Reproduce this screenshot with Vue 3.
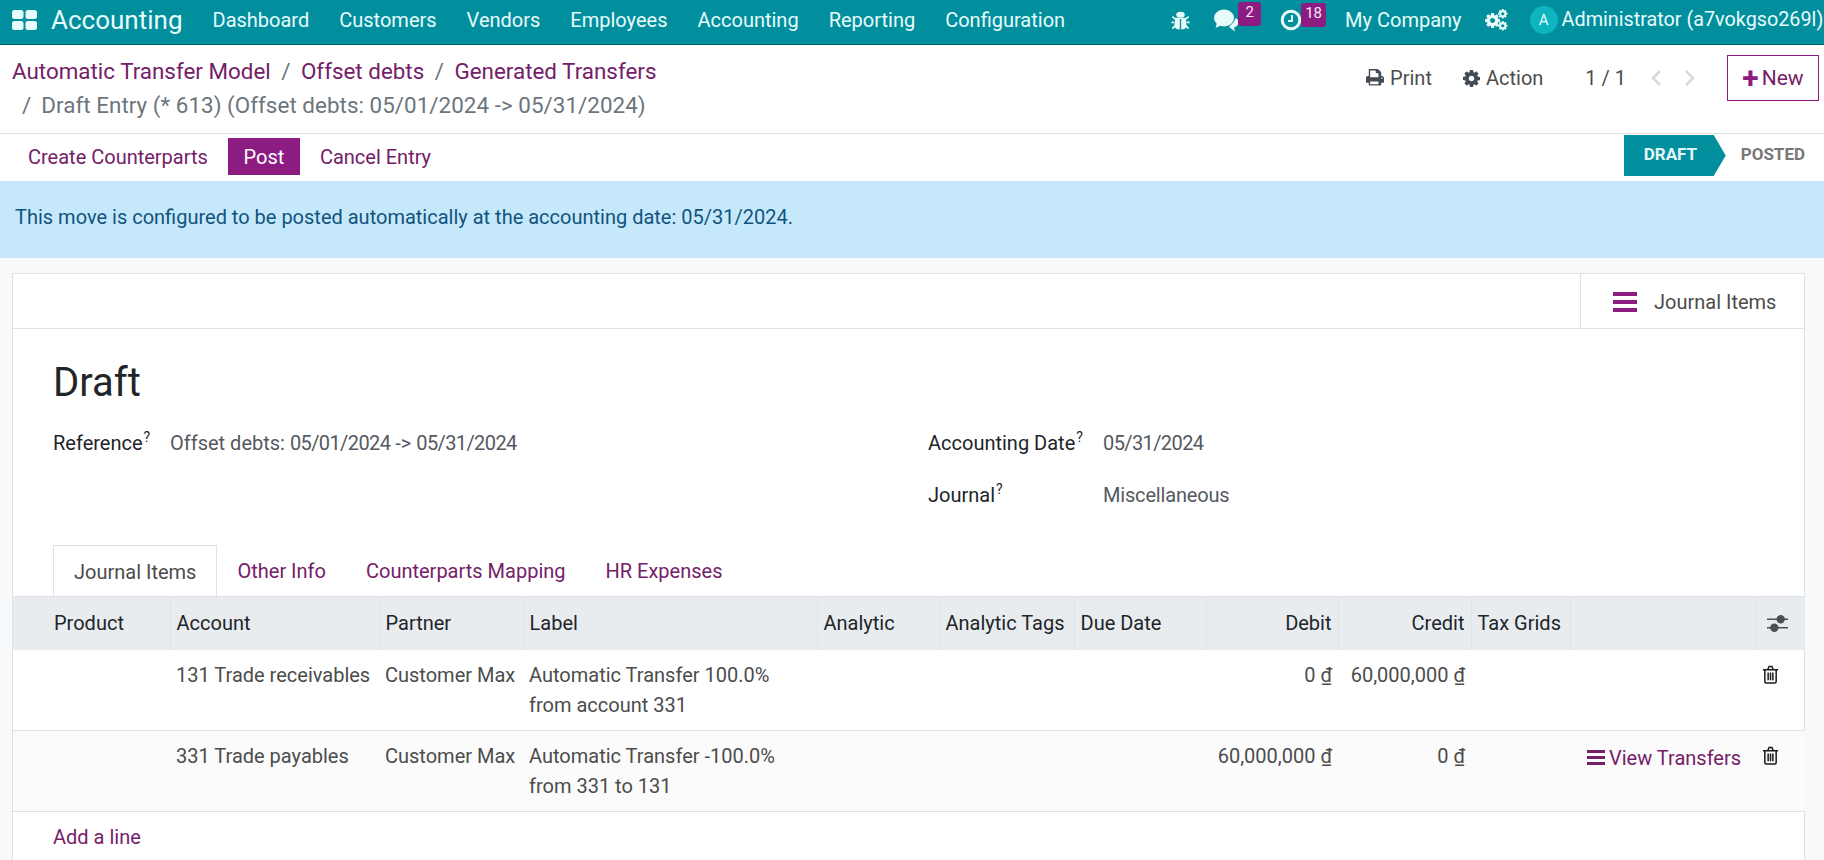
<script setup>
const navItems = ['Dashboard', 'Customers', 'Vendors', 'Employees', 'Accounting', 'Reporting', 'Configuration'];
const tabs = ['Other Info', 'Counterparts Mapping', 'HR Expenses'];

const cog = 'M1024 768q0-106-75-181t-181-75-181 75-75 181 75 181 181 75 181-75 75-181zm512-109v222q0 12-8 23t-20 13l-185 28q-19 54-39 91 35 50 107 138 10 12 10 25t-9 23q-27 37-99 108t-94 71q-12 0-26-9l-138-108q-44 23-91 38-16 136-29 186-7 28-36 28h-222q-14 0-24.5-8.5t-11.5-21.5l-28-184q-49-16-90-37l-141 107q-10 9-25 9-14 0-25-11-126-114-165-168-7-10-7-23 0-12 8-23 15-21 51-66.500t54-70.500q-27-50-41-99l-183-27q-13-2-21-12.500t-8-23.500v-222q0-12 8-23t19-13l186-28q14-46 39-92-40-57-107-138-10-12-10-24 0-10 9-23 26-36 98.500-107.500t94.500-71.500q13 0 26 10l138 107q44-23 91-38 16-136 29-186 7-28 36-28h222q14 0 24.500 8.500t11.500 21.500l28 184q49 16 90 37l142-107q9-9 24-9 13 0 25 10 129 119 165 170 7 8 7 22 0 12-8 23-15 21-51 66.500t-54 70.500q26 50 41 98l183 28q13 2 21 12.500t8 23.500z';
const printer = 'M384 1408h768v-256h-768v256zm0-640h768v-384h-160q-40 0-68-28t-28-68v-160h-512v640zm1152 64q0-26-19-45t-45-19-45 19-19 45 19 45 45 19 45-19 19-45zm128 0v416q0 13-9.500 22.500t-22.500 9.500h-224v160q0 40-28 68t-68 28h-960q-40 0-68-28t-28-68v-160h-224q-13 0-22.500-9.500t-9.500-22.500v-416q0-79 56.500-135.500t135.500-56.500h64v-544q0-40 28-68t68-28h672q40 0 88 20t76 48l152 152q28 28 48 76t20 88v256h64q79 0 135.500 56.500t56.500 135.500z';

const columns = [
  { name: 'Product', width: 157, cls: 'first' },
  { name: 'Account', width: 209 },
  { name: 'Partner', width: 144 },
  { name: 'Label', width: 294 },
  { name: 'Analytic', width: 122 },
  { name: 'Analytic Tags', width: 135 },
  { name: 'Due Date', width: 132 },
  { name: 'Debit', width: 132, cls: 'num' },
  { name: 'Credit', width: 133, cls: 'num' },
  { name: 'Tax Grids', width: 99 },
  { name: '', width: 186 },
  { name: '', width: 49 },
];

const lines = [
  { account: '131 Trade receivables', label: ['Automatic Transfer 100.0%', 'from account 331'], debit: '0 ₫', credit: '60,000,000 ₫', transfers: false },
  { account: '331 Trade payables', label: ['Automatic Transfer -100.0%', 'from 331 to 131'], debit: '60,000,000 ₫', credit: '0 ₫', transfers: true },
];
</script>

<template>
  <div class="page">
    <header class="navbar">
      <svg class="apps" viewBox="0 0 25 20" width="25" height="20">
        <rect x="0" y="0" width="11.500" height="9" rx="2.500" />
        <rect x="13.500" y="0" width="11.500" height="9" rx="2.500" />
        <rect x="0" y="11" width="11.500" height="9" rx="2.500" />
        <rect x="13.500" y="11" width="11.500" height="9" rx="2.500" />
      </svg>
      <span class="brand">Accounting</span>
      <nav class="menu">
        <a v-for="item in navItems" :key="item">{{ item }}</a>
      </nav>
      <div class="systray">
        <svg class="bug" viewBox="0 0 20 20" width="19" height="20">
          <ellipse cx="10" cy="4.500" rx="4.500" ry="3.200" />
          <path d="M4.500 7.500h11l1 9q-.5 3-5.800 3.500V9h-1.400v11Q4 19.500 3.500 16.500z" />
          <path d="M4.500 9L1.500 6.500M15.500 9l3-2.500M3.500 12.500H.5M16.500 12.500h3M4.500 16L1.500 19M15.500 16l3 3" fill="none" stroke="#e8fbfb" stroke-width="1.800" />
        </svg>
        <span class="tray-icon chat">
          <svg viewBox="0 0 28 24" width="28" height="24">
            <path d="M16 19l6 4.500-1-4c3-1 5-3.500 5-6.500l-3-3z" />
            <ellipse cx="11" cy="10" rx="11" ry="9" fill="#0f919f" />
            <ellipse cx="11" cy="10" rx="10" ry="8.500" />
            <path d="M4 15l-1.500 5 6-3z" />
          </svg>
          <span class="badge">2</span>
        </span>
        <span class="tray-icon clock">
          <svg viewBox="0 0 22 22" width="22" height="22">
            <circle cx="11" cy="11" r="8.800" fill="none" stroke="#e8fbfb" stroke-width="3" />
            <path d="M12 6v6H8" fill="none" stroke="#e8fbfb" stroke-width="2" />
          </svg>
          <span class="badge wide">18</span>
        </span>
        <span class="company">My Company</span>
        <svg class="cogs" viewBox="0 0 24 22" width="24" height="22">
          <path :d="cog" transform="translate(0 4) scale(0.0098)" />
          <path :d="cog" transform="translate(13 0) scale(0.0062)" />
          <path :d="cog" transform="translate(13 12) scale(0.0062)" />
        </svg>
        <span class="avatar">A</span>
        <span class="user">Administrator (a7vokgso269l)</span>
      </div>
    </header>

    <section class="control-panel">
      <div class="breadcrumb">
        <div class="crumb-line">
          <a>Automatic Transfer Model</a><span class="slash">/</span><a>Offset debts</a><span class="slash">/</span><a>Generated Transfers</a>
        </div>
        <div class="crumb-line current">
          <span class="slash lead">/</span>Draft Entry (* 613) (Offset debts: 05/01/2024 -&gt; 05/31/2024)
        </div>
      </div>
      <div class="cp-actions">
        <span class="cp-btn print">
          <svg viewBox="0 0 1664 1664" width="18" height="18"><path :d="printer" /></svg>Print
        </span>
        <span class="cp-btn action">
          <svg viewBox="0 0 1536 1536" width="17" height="17"><path :d="cog" /></svg>Action
        </span>
        <span class="pager">1 / 1</span>
        <svg class="chev" viewBox="0 0 12 18" width="12" height="18"><path d="M10 2L3 9l7 7" /></svg>
        <svg class="chev next" viewBox="0 0 12 18" width="12" height="18"><path d="M2 2l7 7-7 7" /></svg>
        <button class="btn-new"><span class="plus">+</span>New</button>
      </div>
    </section>

    <section class="status-row">
      <div class="status-actions">
        <a class="act">Create Counterparts</a>
        <button class="btn-post">Post</button>
        <a class="act">Cancel Entry</a>
      </div>
      <div class="statusbar">
        <span class="st-draft">DRAFT</span>
        <span class="st-posted">POSTED</span>
      </div>
    </section>

    <div class="alert">This move is configured to be posted automatically at the accounting date: 05/31/2024.</div>

    <main class="sheet">
      <div class="button-box">
        <div class="stat-btn">
          <svg viewBox="0 0 24 20" width="24" height="20">
            <rect y="0" width="24" height="4" />
            <rect y="8" width="24" height="4" />
            <rect y="16" width="24" height="4" />
          </svg>
          <span>Journal Items</span>
        </div>
      </div>

      <h1 class="title">Draft</h1>

      <div class="fields">
        <div class="field">
          <label class="lbl-left">Reference<sup>?</sup></label>
          <span class="value">Offset debts: <span class="date">05/01/2024</span> -&gt; <span class="date">05/31/2024</span></span>
        </div>
        <div class="right-fields">
          <div class="field">
            <label class="lbl-right">Accounting Date<sup>?</sup></label>
            <span class="value date">05/31/2024</span>
          </div>
          <div class="field">
            <label class="lbl-right">Journal<sup>?</sup></label>
            <span class="value misc">Miscellaneous</span>
          </div>
        </div>
      </div>

      <div class="tabs">
        <span class="tab active">Journal Items</span>
        <a v-for="tab in tabs" :key="tab" class="tab">{{ tab }}</a>
      </div>

      <table class="lines">
        <colgroup>
          <col v-for="(c, i) in columns" :key="i" :style="{ width: c.width + 'px' }" />
        </colgroup>
        <thead>
          <tr>
            <th v-for="(c, i) in columns" :key="i" :class="c.cls">
              {{ c.name }}
              <svg v-if="i === columns.length - 1" class="sliders" viewBox="0 0 20 18" width="21" height="19">
                <path d="M0 5h20M0 13h20" stroke="#4a4f57" stroke-width="1.500" />
                <circle cx="13" cy="5" r="4" fill="#4a4f57" />
                <circle cx="7" cy="13" r="4" fill="#4a4f57" />
              </svg>
            </th>
          </tr>
        </thead>
        <tbody>
          <tr v-for="line in lines" :key="line.account">
            <td></td>
            <td>{{ line.account }}</td>
            <td>Customer Max</td>
            <td>{{ line.label[0] }}<br />{{ line.label[1] }}</td>
            <td></td>
            <td></td>
            <td></td>
            <td class="num">{{ line.debit }}</td>
            <td class="num">{{ line.credit }}</td>
            <td></td>
            <td class="transfers">
              <a v-if="line.transfers">
                <svg viewBox="0 0 18 15" width="18" height="15">
                  <rect y="0" width="18" height="3" />
                  <rect y="6" width="18" height="3" />
                  <rect y="12" width="18" height="3" />
                </svg>View Transfers
              </a>
            </td>
            <td class="trash-cell">
              <svg viewBox="0 0 18 20" width="17" height="19" class="trash">
                <path d="M1 5h16M6 5l1.500-3.500h3L12 5M3 5v12.500q0 1.500 1.500 1.500h9q1.500 0 1.500-1.500V5" />
                <path d="M6.500 8v8M9 8v8M11.500 8v8" />
              </svg>
            </td>
          </tr>
        </tbody>
      </table>

      <a class="add-line">Add a line</a>
    </main>
  </div>
</template>

<style>
html, body {
  margin: 0;
  overflow: hidden;
}
</style>

<style scoped>
.page {
  height: 860px;
  overflow: hidden;
  background: #f8f9fb;
  font-family: Roboto, "Liberation Sans", sans-serif;
  font-size: 20px;
  line-height: 30px;
  color: #4c4c4c;
}
a {
  color: #742068;
  text-decoration: none;
}

/* top bar */
.navbar {
  display: flex;
  align-items: center;
  height: 40px;
  padding: 0 0 4px 12px;
  background: #018f9e;
  border-bottom: 1px solid #02606b;
  color: #e8fbfb;
  white-space: nowrap;
  overflow: hidden;
}
.apps {
  fill: #e8fbfb;
  flex-shrink: 0;
  margin-right: 14px;
}
.brand {
  font-size: 26px;
  margin-right: 30px;
}
.menu {
  display: flex;
  gap: 30px;
  flex-shrink: 0;
}
.menu a {
  color: #e8fbfb;
}
.systray {
  display: flex;
  align-items: center;
  flex-shrink: 0;
  margin-left: 106px;
}
.systray svg {
  fill: #e8fbfb;
  flex-shrink: 0;
}
.tray-icon {
  position: relative;
  display: flex;
  align-items: center;
}
.chat {
  margin-left: 23px;
}
.clock {
  margin-left: 39px;
}
.badge {
  position: absolute;
  left: 25px;
  top: -6px;
  width: 23px;
  height: 24px;
  border-radius: 3px;
  background: #8d1c82;
  color: #f3e6f1;
  font-size: 15px;
  line-height: 20px;
  text-align: center;
}
.badge.wide {
  left: 21px;
  top: -6px;
  width: 25px;
}
.company {
  margin-left: 43px;
}
.cogs {
  margin-left: 23px;
}
.avatar {
  width: 28px;
  height: 28px;
  margin-left: 21px;
  border-radius: 50%;
  background: #0db3bd;
  font-size: 15px;
  line-height: 28px;
  text-align: center;
}
.user {
  margin-left: 4px;
  font-size: 19.8px;
}

/* breadcrumb + actions */
.control-panel {
  display: flex;
  justify-content: space-between;
  height: 88px;
  background: #fff;
  border-bottom: 1px solid #dee2e6;
}
.breadcrumb {
  padding: 9px 0 0 12px;
  font-size: 22.4px;
  line-height: 34px;
  white-space: nowrap;
}
.crumb-line.current {
  color: #6c757d;
  letter-spacing: 0.04px;
}
.slash {
  margin: 0 10.500px;
  color: #6c757d;
}
.slash.lead {
  margin-left: 10px;
  margin-right: 10px;
}
.cp-actions {
  display: flex;
  align-items: center;
  height: 46px;
  margin-top: 10px;
  padding-right: 5px;
  white-space: nowrap;
}
.cp-btn {
  display: flex;
  align-items: center;
  gap: 6px;
}
.cp-btn svg {
  fill: #454b53;
}
.action {
  margin-left: 31px;
}
.pager {
  margin-left: 42px;
  margin-right: 24px;
}
.chev {
  fill: none;
  stroke: #d5d8dc;
  stroke-width: 2.500;
}
.chev.next {
  margin-left: 22px;
  margin-right: 31px;
}
.btn-new {
  display: flex;
  align-items: center;
  justify-content: center;
  width: 92px;
  height: 46px;
  padding: 0;
  border: 1px solid #8d1c82;
  background: #fff;
  color: #742068;
  font: inherit;
  font-size: 21px;
}
.plus {
  margin-right: 3px;
  font-size: 30px;
  font-weight: 700;
  color: #8d1c82;
}

/* action row */
.status-row {
  display: flex;
  justify-content: space-between;
  height: 47px;
  background: #fff;
}
.status-actions {
  display: flex;
  align-items: center;
  padding: 0 0 2px 28px;
  gap: 20px;
}
.btn-post {
  width: 72px;
  height: 37px;
  padding: 0;
  border: none;
  background: #8d1c82;
  color: #fff;
  font: inherit;
}
.statusbar {
  display: flex;
  align-items: flex-start;
  padding: 1px 19px 0 0;
  font-size: 17px;
  font-weight: 700;
  line-height: 39px;
}
.st-draft {
  width: 102px;
  height: 41px;
  padding-left: 20px;
  box-sizing: border-box;
  background: #018f9e;
  color: #e3f6f7;
  clip-path: polygon(0 0, 90px 0, 100% 50%, 90px 100%, 0 100%);
}
.st-posted {
  margin-left: 15px;
  color: #777;
}

.alert {
  display: flex;
  align-items: center;
  height: 71px;
  padding: 0 0 6px 15px;
  background: #c5e9fb;
  color: #12537e;
}

/* form sheet */
.sheet {
  margin: 15px 19px 0 12px;
  background: #fff;
  border: 1px solid #dee2e6;
  border-bottom: none;
  height: 600px;
}
.button-box {
  display: flex;
  justify-content: flex-end;
  height: 54px;
  border-bottom: 1px solid #dee2e6;
}
.stat-btn {
  display: flex;
  align-items: center;
  gap: 17px;
  width: 224px;
  padding: 2px 0 0 32px;
  box-sizing: border-box;
  border-left: 1px solid #dee2e6;
}
.stat-btn svg {
  fill: #8d1c82;
}
.title {
  margin: 31px 0 0 40px;
  font-size: 40px;
  line-height: 46px;
  font-weight: 400;
  color: #212529;
}
.fields {
  display: grid;
  grid-template-columns: 875px 1fr;
  height: 117px;
  margin: 22px 0 0 40px;
}
.field {
  display: flex;
  height: 52px;
  align-items: flex-start;
}
.value {
  color: #55595f;
}
.date {
  letter-spacing: -0.6px;
}
.misc {
  letter-spacing: -0.18px;
}
label {
  color: #212529;
}
sup {
  font-size: 14px;
  line-height: 0;
  margin-left: 1px;
}
.lbl-left {
  width: 117px;
}
.lbl-right {
  width: 175px;
}
.tabs {
  display: flex;
  height: 51px;
  padding-left: 40px;
}
.tab {
  height: 51px;
  padding: 11px 20px;
  box-sizing: border-box;
}
.tab.active {
  border: 1px solid #dee2e6;
  border-bottom: none;
  background: #fff;
  color: #4c4c4c;
}

/* lines table */
.lines {
  width: 1792px;
  table-layout: fixed;
  border-collapse: collapse;
}
th {
  height: 53px;
  padding: 0 6px;
  box-sizing: border-box;
  background: #e9ecef;
  border-top: 1px solid #dee2e6;
  border-left: 1px solid #dfe3e6;
  color: #212529;
  font-weight: 400;
  text-align: left;
  white-space: nowrap;
}
th:first-child {
  border-left: none;
}
th.first {
  padding-left: 41px;
}
th.num, td.num {
  text-align: right;
}
.sliders {
  display: block;
  margin-left: 4px;
}
td {
  height: 81px;
  padding: 10px 6px;
  box-sizing: border-box;
  vertical-align: top;
  border-bottom: 1px solid #dee2e6;
  white-space: nowrap;
}
tbody tr:nth-child(2) td {
  background: #fbfbfb;
}
.transfers {
  padding-left: 17px;
  padding-top: 12px;
}
.transfers svg {
  fill: #742068;
  margin-right: 4px;
}
.trash-cell {
  padding-left: 6px;
}
.trash {
  display: block;
  margin-top: 5px;
  fill: none;
  stroke: #1b1b1b;
  stroke-width: 1.600;
}
.add-line {
  display: block;
  margin: 10px 0 0 40px;
}
</style>
